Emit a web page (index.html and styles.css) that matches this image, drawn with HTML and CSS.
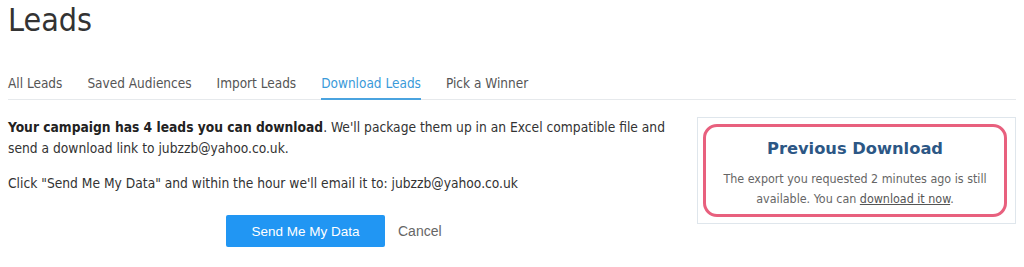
FILE: index.html
```html
<!DOCTYPE html>
<html>
<head>
<meta charset="utf-8">
<link rel="stylesheet" href="styles.css">
</head>
<body>
<div class="page">
  <h1 class="title">Leads</h1>
  <nav class="tabs">
    <a class="tab">All Leads</a>
    <a class="tab">Saved Audiences</a>
    <a class="tab">Import Leads</a>
    <a class="tab active">Download Leads</a>
    <a class="tab">Pick a Winner</a>
  </nav>
  <div class="content">
    <div class="main">
      <p class="para"><strong>Your campaign has 4 leads you can download</strong>. We'll package them up in an Excel compatible file and send a download link to jubzzb@yahoo.co.uk.</p>
      <p class="para second">Click "Send Me My Data" and within the hour we'll email it to: jubzzb@yahoo.co.uk</p>
      <div class="actions">
        <button class="btn-primary">Send Me My Data</button>
        <a class="cancel">Cancel</a>
      </div>
    </div>
    <aside class="side">
      <div class="notice">
        <h2 class="notice-title">Previous Download</h2>
        <p class="notice-text">The export you requested 2 minutes ago is still available. You can <a class="link">download it now</a>.</p>
      </div>
    </aside>
  </div>
</div>
</body>
</html>
```
FILE: styles.css
```css
* { box-sizing: border-box; }
html, body { margin: 0; padding: 0; background: #fff; }
body {
  font-family: "DejaVu Sans Condensed", "DejaVu Sans", sans-serif;
  color: #333;
  font-size: 13.7px;
}
.page { padding: 0 8px; }
.title {
  margin: 0;
  padding-top: 2px;
  font-weight: normal;
  font-size: 32px;
  line-height: 36px;
  color: #333;
  font-family: "DejaVu Sans Condensed", sans-serif;
}
.tabs {
  display: flex;
  gap: 25px;
  margin-top: 36px;
  border-bottom: 1px solid #e6e9ec;
}
.tab {
  font-size: 13.5px;
  color: #555;
  padding-bottom: 6px;
  line-height: 18px;
  border-bottom: 2px solid transparent;
  margin-bottom: -1px;
}
.tab.active { color: #3a9ad9; border-bottom-color: #4aa3df; }
.content {
  display: flex;
  justify-content: space-between;
  margin-top: 17px;
}
.main { width: 668px; }
.para { margin: 0; line-height: 21px; color: #333; }
.para strong { color: #222; }
.para.second { margin-top: 14px; }
.actions {
  display: flex;
  align-items: center;
  gap: 13px;
  margin-top: 21px;
  padding-left: 218px;
}
.btn-primary {
  background: #2196f3;
  color: #fff;
  border: 0;
  border-radius: 2px;
  width: 159px;
  height: 32px;
  font-family: "Liberation Sans", Arial, sans-serif;
  font-size: 13.5px;
}
.cancel {
  font-family: "Liberation Sans", Arial, sans-serif;
  font-size: 14px;
  color: #666;
}
.side {
  width: 319px;
  border: 1px solid #dfe6ec;
  padding: 6px 8px 6px 5px;
  align-self: flex-start;
}
.notice {
  border: 3px solid #e8607e;
  border-radius: 14px;
  text-align: center;
  padding: 10px 8px 5px;
}
.notice-title {
  margin: 0;
  font-family: "DejaVu Sans", sans-serif;
  font-weight: bold;
  font-size: 16.3px;
  line-height: 24px;
  color: #2c5785;
}
.notice-text {
  margin: 8px 0 0;
  font-size: 12.4px;
  line-height: 20px;
  color: #666;
}
.link { color: #555; text-decoration: underline; }
```
